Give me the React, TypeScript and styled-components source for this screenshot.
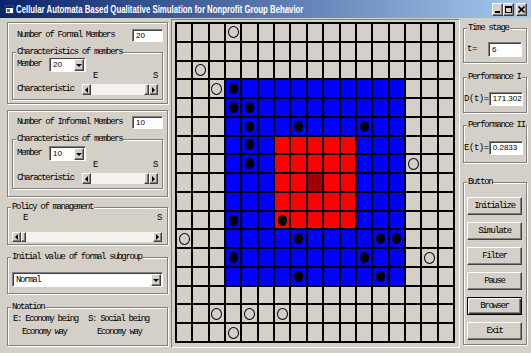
import React from 'react';
import styled, { createGlobalStyle, css } from 'styled-components';

const FACE = '#d4d0c8';
const MONO = '"Liberation Mono", "DejaVu Sans Mono", monospace';
const SANS = '"Liberation Sans", Arial, sans-serif';

const GlobalStyle = createGlobalStyle`
  html, body { margin: 0; padding: 0; background: ${FACE}; }
  #root { width: 531px; height: 353px; }
`;

const Window = styled.div`
  width: 531px;
  height: 353px;
  box-sizing: border-box;
  overflow: hidden;
  display: flex;
  flex-direction: column;
  background: ${FACE};
  font-family: ${MONO};
  font-size: 9px;
  letter-spacing: -1.35px;
  color: #000;
  line-height: 1;
`;

const TitleBar = styled.div`
  flex: none;
  height: 18px;
  box-sizing: border-box;
  display: flex;
  align-items: center;
  padding: 0 4px 0 5px;
  background: linear-gradient(to right, #0a246a 0%, #a6caf0 100%);
`;

const TitleText = styled.span`
  font-family: ${SANS};
  font-weight: bold;
  font-size: 11px;
  letter-spacing: 0;
  color: #fff;
  white-space: nowrap;
  margin-left: 2px;
  transform: scaleX(0.71);
  transform-origin: left center;
`;

const CaptionButtons = styled.div`
  margin-left: auto;
  display: flex;
`;

const CaptionButton = styled.div<{ $gap?: boolean }>`
  width: 11px;
  height: 13px;
  box-sizing: border-box;
  margin-left: ${p => (p.$gap ? 2 : 0)}px;
  background: ${FACE};
  border: 1px solid;
  border-color: #fff #404040 #404040 #fff;
  box-shadow: inset -1px -1px 0 #808080;
  display: flex;
  align-items: center;
  justify-content: center;
`;

const Body = styled.div`
  flex: 1;
  min-height: 0;
  display: flex;
  padding: 1px 0 5px 2px;
`;

const LeftColumn = styled.div`
  flex: none;
  width: 168px;
  box-sizing: border-box;
  padding: 3px 2px 0 5px;
  display: flex;
  flex-direction: column;
`;

const etched = css`
  border: 1px solid #808080;
  box-shadow: inset 1px 1px 0 #fff, 1px 1px 0 #fff;
`;

const Panel = styled.div<{ $h: number; $pt: number; $mt?: number }>`
  flex: none;
  height: ${p => p.$h}px;
  margin-top: ${p => p.$mt ?? 0}px;
  padding-top: ${p => p.$pt}px;
  box-sizing: border-box;
  ${etched};
  display: flex;
  flex-direction: column;
`;

const FieldRow = styled.div`
  display: flex;
  align-items: center;
  justify-content: space-between;
  padding: 0 4px 0 9px;
`;

const Group = styled.div<{ $h: number; $pt: number; $mt?: number; $mx?: number }>`
  position: relative;
  flex: none;
  height: ${p => p.$h}px;
  margin: ${p => p.$mt ?? 0}px ${p => p.$mx ?? 0}px 0;
  padding-top: ${p => p.$pt}px;
  box-sizing: border-box;
  ${etched};
  display: flex;
  flex-direction: column;
`;

const Legend = styled.span`
  position: absolute;
  top: -6px;
  left: 3px;
  padding: 0 1px;
  background: ${FACE};
  line-height: 11px;
  white-space: nowrap;
`;

const TextBox = styled.div<{ $w: number; $h: number }>`
  flex: none;
  width: ${p => p.$w}px;
  height: ${p => p.$h}px;
  box-sizing: border-box;
  background: #fff;
  border: 1px solid;
  border-color: #808080 #fff #fff #808080;
  box-shadow: inset 1px 1px 0 #404040;
  font-family: ${SANS};
  font-size: 8px;
  letter-spacing: 0;
  display: flex;
  align-items: center;
  padding-left: 3px;
`;

const MemberRow = styled.div`
  display: flex;
  align-items: center;
  padding-left: 4px;
`;

const MemberLabel = styled.span`
  width: 32px;
  flex: none;
`;

const Combo = styled.div<{ $w?: number }>`
  ${p => (p.$w ? css`width: ${p.$w}px;` : css`align-self: stretch;`)}
  height: 15px;
  box-sizing: border-box;
  background: #fff;
  border: 1px solid;
  border-color: #808080 #fff #fff #808080;
  box-shadow: inset 1px 1px 0 #404040;
  display: flex;
  align-items: stretch;
  padding: 1px 1px 0 1px;
`;

const ComboText = styled.span<{ $sans?: boolean }>`
  flex: 1;
  display: flex;
  align-items: center;
  padding-left: 2px;
  ${p =>
    p.$sans &&
    css`
      font-family: ${SANS};
      font-size: 8px;
      letter-spacing: 0;
    `}
`;

const raised = css`
  background: ${FACE};
  border: 1px solid;
  border-color: #fff #404040 #404040 #fff;
  box-shadow: inset -1px -1px 0 #808080;
`;

const DropButton = styled.div`
  width: 10px;
  flex: none;
  box-sizing: border-box;
  ${raised};
  display: flex;
  align-items: center;
  justify-content: center;
`;

const CharGrid = styled.div`
  display: grid;
  grid-template-columns: 65px 76px;
  grid-template-rows: 8px 11px;
  row-gap: 4px;
  align-items: center;
  padding-left: 4px;
`;

const ScaleLabels = styled.div<{ $w?: number }>`
  display: flex;
  justify-content: space-between;
  align-items: center;
  height: 8px;
  padding: 0 1px 0 11px;
  box-sizing: border-box;
  ${p => p.$w && css`width: ${p.$w}px;`}
`;

const ScrollBar = styled.div<{ $w: number; $h: number; $mt?: number }>`
  display: flex;
  width: ${p => p.$w}px;
  height: ${p => p.$h}px;
  margin-top: ${p => p.$mt ?? 0}px;
`;

const ScrollArrow = styled.div`
  width: 9px;
  flex: none;
  box-sizing: border-box;
  ${raised};
  display: flex;
  align-items: center;
  justify-content: center;
`;

const Track = styled.div<{ $end?: boolean }>`
  flex: 1;
  background: #f3f2ef;
  display: flex;
  justify-content: ${p => (p.$end ? 'flex-end' : 'flex-start')};
`;

const Thumb = styled.div`
  width: 5px;
  box-sizing: border-box;
  ${raised};
`;

const Tri = styled.span<{ $dir: 'left' | 'right' | 'down' }>`
  width: 0;
  height: 0;
  ${p =>
    p.$dir === 'down'
      ? css`
          border-left: 3px solid transparent;
          border-right: 3px solid transparent;
          border-top: 3px solid #000;
        `
      : p.$dir === 'left'
      ? css`
          border-top: 3px solid transparent;
          border-bottom: 3px solid transparent;
          border-right: 3px solid #000;
        `
      : css`
          border-top: 3px solid transparent;
          border-bottom: 3px solid transparent;
          border-left: 3px solid #000;
        `}
`;

const GroupInner = styled.div<{ $pr: number }>`
  padding: 0 ${p => p.$pr}px 0 4px;
  display: flex;
  flex-direction: column;
`;

const NotationGrid = styled.div`
  display: grid;
  grid-template-columns: 75px auto;
  line-height: 13px;
  padding-left: 5px;
  white-space: nowrap;
`;

const Indented = styled.span`
  padding-left: 9px;
`;

const Board = styled.div`
  flex: none;
  width: 289px;
  margin-left: 1px;
  box-sizing: border-box;
  border: 1px solid;
  border-color: #808080 #fff #fff #808080;
  padding: 2px 0 0 3px;
`;

const CellGrid = styled.div`
  width: 280px;
  height: 321px;
  box-sizing: border-box;
  display: grid;
  grid-template-columns: repeat(17, 1fr);
  grid-template-rows: repeat(17, 1fr);
  gap: 2px;
  padding: 2px;
  background: #000;
`;

const Cell = styled.div<{ $fill: string }>`
  background: ${p => p.$fill};
  min-width: 0;
  min-height: 0;
  display: flex;
  align-items: center;
  justify-content: center;
`;

const Mark = styled.span<{ $ring?: boolean }>`
  flex: none;
  box-sizing: border-box;
  border-radius: 50%;
  ${p =>
    p.$ring
      ? css`
          width: 11px;
          height: 12px;
          border: 1.5px solid #000;
        `
      : css`
          width: 9px;
          height: 11px;
          background: #000;
        `}
`;

const RightColumn = styled.div`
  flex: none;
  width: 71px;
  box-sizing: border-box;
  padding: 9px 4px 0 3px;
  display: flex;
  flex-direction: column;
`;

const StatRow = styled.div<{ $pl: number }>`
  display: flex;
  align-items: center;
  justify-content: space-between;
  padding: 0 4px 0 ${p => p.$pl}px;
`;

const StatLabel = styled.span`
  letter-spacing: -0.45px;
`;

const ButtonStack = styled.div`
  display: flex;
  flex-direction: column;
  gap: 7px;
  padding: 0 4px 0 3px;
`;

const PushButton = styled.button<{ $default?: boolean }>`
  all: unset;
  height: 18px;
  box-sizing: border-box;
  display: flex;
  align-items: center;
  justify-content: center;
  font-family: ${MONO};
  font-size: 9px;
  letter-spacing: -1.35px;
  color: #000;
  ${raised};
  ${p =>
    p.$default &&
    css`
      border-color: #000;
      box-shadow: inset 1px 1px 0 #fff, inset -1px -1px 0 #404040, inset -2px -2px 0 #808080;
    `}
`;

const BLUE_MIN = 3;
const BLUE_MAX = 13;
const RED_MIN = 6;
const RED_MAX = 10;

const RINGS = new Set(['3,0', '1,2', '2,3', '14,7', '0,11', '15,12', '2,15', '4,15', '6,15', '3,16']);
const DOTS = new Set([
  '3,3', '3,4', '4,4', '4,5', '7,5', '11,5', '4,6', '4,7',
  '3,10', '6,10', '7,11', '12,11', '13,11', '3,12', '11,12', '7,13', '12,13',
]);

function cellFill(c: number, r: number): string {
  if (c === 8 && r === 8) return '#a00000';
  if (c >= RED_MIN && c <= RED_MAX && r >= RED_MIN && r <= RED_MAX) return '#ff0000';
  if (c >= BLUE_MIN && c <= BLUE_MAX && r >= BLUE_MIN && r <= BLUE_MAX) return '#0000ff';
  return FACE;
}

function Scroll({ w, h, end, mt }: { w: number; h: number; end?: boolean; mt?: number }) {
  return (
    <ScrollBar $w={w} $h={h} $mt={mt}>
      <ScrollArrow>
        <Tri $dir="left" />
      </ScrollArrow>
      <Track $end={end}>
        <Thumb />
      </Track>
      <ScrollArrow>
        <Tri $dir="right" />
      </ScrollArrow>
    </ScrollBar>
  );
}

function MemberCombo({ value }: { value: string }) {
  return (
    <Combo $w={37}>
      <ComboText $sans>{value}</ComboText>
      <DropButton>
        <Tri $dir="down" />
      </DropButton>
    </Combo>
  );
}

function MembersPanel({
  title,
  value,
  h,
  pt,
  mt,
  groupPt,
  groupH,
}: {
  title: string;
  value: string;
  h: number;
  pt: number;
  mt?: number;
  groupPt: number;
  groupH: number;
}) {
  return (
    <Panel $h={h} $pt={pt} $mt={mt}>
      <FieldRow>
        <span>{title}</span>
        <TextBox $w={31} $h={13}>{value}</TextBox>
      </FieldRow>
      <Group $h={groupH} $pt={groupPt} $mt={10} $mx={4}>
        <Legend>Characteristics of members</Legend>
        <MemberRow>
          <MemberLabel>Member</MemberLabel>
          <MemberCombo value={value} />
        </MemberRow>
        <CharGrid>
          <span />
          <ScaleLabels>
            <span>E</span>
            <span>S</span>
          </ScaleLabels>
          <span>Characteristic</span>
          <Scroll w={76} h={11} end />
        </CharGrid>
      </Group>
    </Panel>
  );
}

function AppIcon() {
  return (
    <svg width="9" height="9" viewBox="0 0 9 9">
      <rect x="0.5" y="0.5" width="8" height="8" fill="#fff" stroke="#404040" />
      <rect x="1" y="1" width="7" height="2" fill="#0a246a" />
      <rect x="2" y="4" width="3" height="3" fill="#3a6ea5" />
    </svg>
  );
}

export default function App() {
  const cells = [];
  for (let r = 0; r < 17; r++) {
    for (let c = 0; c < 17; c++) {
      const key = `${c},${r}`;
      cells.push(
        <Cell key={key} $fill={cellFill(c, r)}>
          {RINGS.has(key) && <Mark $ring />}
          {DOTS.has(key) && <Mark />}
        </Cell>
      );
    }
  }

  return (
    <>
      <GlobalStyle />
      <Window>
        <TitleBar>
          <AppIcon />
          <TitleText>Cellular Automata Based Qualitative Simulation for Nonprofit Group Behavior</TitleText>
          <CaptionButtons>
            <CaptionButton>
              <svg width="6" height="7" viewBox="0 0 6 7">
                <rect x="0" y="5" width="5" height="2" fill="#000" />
              </svg>
            </CaptionButton>
            <CaptionButton>
              <svg width="7" height="7" viewBox="0 0 7 7">
                <rect x="0.5" y="0.5" width="6" height="6" fill="none" stroke="#000" />
                <rect x="0" y="0" width="7" height="2" fill="#000" />
              </svg>
            </CaptionButton>
            <CaptionButton $gap>
              <svg width="7" height="7" viewBox="0 0 7 7">
                <path d="M0.5 0.5 L6.5 6.5 M6.5 0.5 L0.5 6.5" stroke="#000" strokeWidth="1.6" />
              </svg>
            </CaptionButton>
          </CaptionButtons>
        </TitleBar>
        <Body>
          <LeftColumn>
            <MembersPanel title="Number of Formal Members" value="20" h={82} pt={6} groupPt={4} groupH={48} />
            <MembersPanel title="Number of Informal Members" value="10" h={87} pt={5} mt={6} groupPt={6} groupH={50} />
            <Group $h={38} $pt={6} $mt={10}>
              <Legend>Policy of management</Legend>
              <GroupInner $pr={5}>
                <ScaleLabels $w={150}>
                  <span>E</span>
                  <span>S</span>
                </ScaleLabels>
                <Scroll w={150} h={10} mt={10} />
              </GroupInner>
            </Group>
            <Group $h={37} $pt={14} $mt={12}>
              <Legend>Initial value of formal subgroup</Legend>
              <GroupInner $pr={4}>
                <Combo>
                  <ComboText>Normal</ComboText>
                  <DropButton>
                    <Tri $dir="down" />
                  </DropButton>
                </Combo>
              </GroupInner>
            </Group>
            <Group $h={39} $pt={5} $mt={13}>
              <Legend>Notation</Legend>
              <NotationGrid>
                <span>E: Economy being</span>
                <span>S: Social being</span>
                <Indented>Economy way</Indented>
                <Indented>Economy way</Indented>
              </NotationGrid>
            </Group>
          </LeftColumn>

          <Board>
            <CellGrid>{cells}</CellGrid>
          </Board>

          <RightColumn>
            <Group $h={35} $pt={13}>
              <Legend>Time stage</Legend>
              <StatRow $pl={3}>
                <StatLabel>t=</StatLabel>
                <TextBox $w={34} $h={15}>6</TextBox>
              </StatRow>
            </Group>
            <Group $h={36} $pt={14} $mt={14}>
              <Legend>Performance I</Legend>
              <StatRow $pl={0}>
                <StatLabel>D(t)=</StatLabel>
                <TextBox $w={34} $h={14}>171.302</TextBox>
              </StatRow>
            </Group>
            <Group $h={38} $pt={15} $mt={12}>
              <Legend>Performance II</Legend>
              <StatRow $pl={0}>
                <StatLabel>E(t)=</StatLabel>
                <TextBox $w={34} $h={14}>0.2833</TextBox>
              </StatRow>
            </Group>
            <Group $h={163} $pt={14} $mt={19}>
              <Legend>Button</Legend>
              <ButtonStack>
                <PushButton>Initialize</PushButton>
                <PushButton>Simulate</PushButton>
                <PushButton>Filter</PushButton>
                <PushButton>Pause</PushButton>
                <PushButton $default>Browser</PushButton>
                <PushButton>Exit</PushButton>
              </ButtonStack>
            </Group>
          </RightColumn>
        </Body>
      </Window>
    </>
  );
}
